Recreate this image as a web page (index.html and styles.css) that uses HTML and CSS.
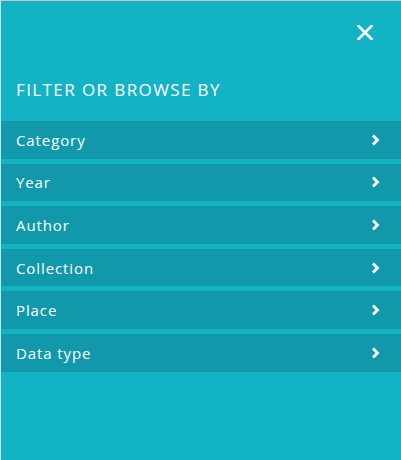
FILE: index.html
```html
<!DOCTYPE html>
<html>
<head>
<meta charset="utf-8">
<link rel="stylesheet" href="styles.css">
</head>
<body>
<div class="panel">
  <div class="top">
    <button class="close" aria-label="Close">
      <svg width="16" height="15" viewBox="0 0 16 15"><path d="M1.5 1L14.5 14M14.5 1L1.5 14" stroke="#fff" stroke-width="2.6" stroke-linecap="square"/></svg>
    </button>
  </div>
  <h2 class="heading">FILTER OR BROWSE BY</h2>
  <ul class="list">
    <li class="row"><span>Category</span><svg class="chev" width="9" height="12" viewBox="0 0 9 12"><path d="M2 1.5L6.5 6L2 10.5" fill="none" stroke="#fff" stroke-width="2.8"/></svg></li>
    <li class="row"><span>Year</span><svg class="chev" width="9" height="12" viewBox="0 0 9 12"><path d="M2 1.5L6.5 6L2 10.5" fill="none" stroke="#fff" stroke-width="2.8"/></svg></li>
    <li class="row"><span>Author</span><svg class="chev" width="9" height="12" viewBox="0 0 9 12"><path d="M2 1.5L6.5 6L2 10.5" fill="none" stroke="#fff" stroke-width="2.8"/></svg></li>
    <li class="row"><span>Collection</span><svg class="chev" width="9" height="12" viewBox="0 0 9 12"><path d="M2 1.5L6.5 6L2 10.5" fill="none" stroke="#fff" stroke-width="2.8"/></svg></li>
    <li class="row"><span>Place</span><svg class="chev" width="9" height="12" viewBox="0 0 9 12"><path d="M2 1.5L6.5 6L2 10.5" fill="none" stroke="#fff" stroke-width="2.8"/></svg></li>
    <li class="row"><span>Data type</span><svg class="chev" width="9" height="12" viewBox="0 0 9 12"><path d="M2 1.5L6.5 6L2 10.5" fill="none" stroke="#fff" stroke-width="2.8"/></svg></li>
  </ul>
</div>
</body>
</html>
```
FILE: styles.css
```css
html, body {
  margin: 0;
  padding: 0;
  background: #13b3c6;
}
.panel {
  box-sizing: border-box;
  width: 401px;
  height: 460px;
  background: #13b3c6;
  border-top: 1px solid #c9c9c9;
  border-left: 1px solid #bfe6ec;
  font-family: "Open Sans", "Noto Sans", sans-serif;
  color: #fff;
}
.top {
  display: flex;
  justify-content: flex-end;
}
.close {
  margin: 24px 28px 0 0;
  padding: 0;
  width: 16px;
  height: 15px;
  border: 0;
  background: none;
  display: block;
}
.close svg { display: block; }
.heading {
  margin: 40px 0 0 15px;
  font-weight: 400;
  font-size: 17px;
  line-height: 20px;
  letter-spacing: 1.4px;
}
.list {
  list-style: none;
  margin: 21px 0 0 0;
  padding: 0;
  display: flex;
  flex-direction: column;
  gap: 5px;
}
.row {
  box-sizing: border-box;
  height: 37.6px;
  background: #1199ab;
  display: flex;
  align-items: center;
  justify-content: space-between;
  padding: 0 21px 0 15px;
  font-size: 15px;
  letter-spacing: 0.9px;
}
.chev { display: block; }
```
